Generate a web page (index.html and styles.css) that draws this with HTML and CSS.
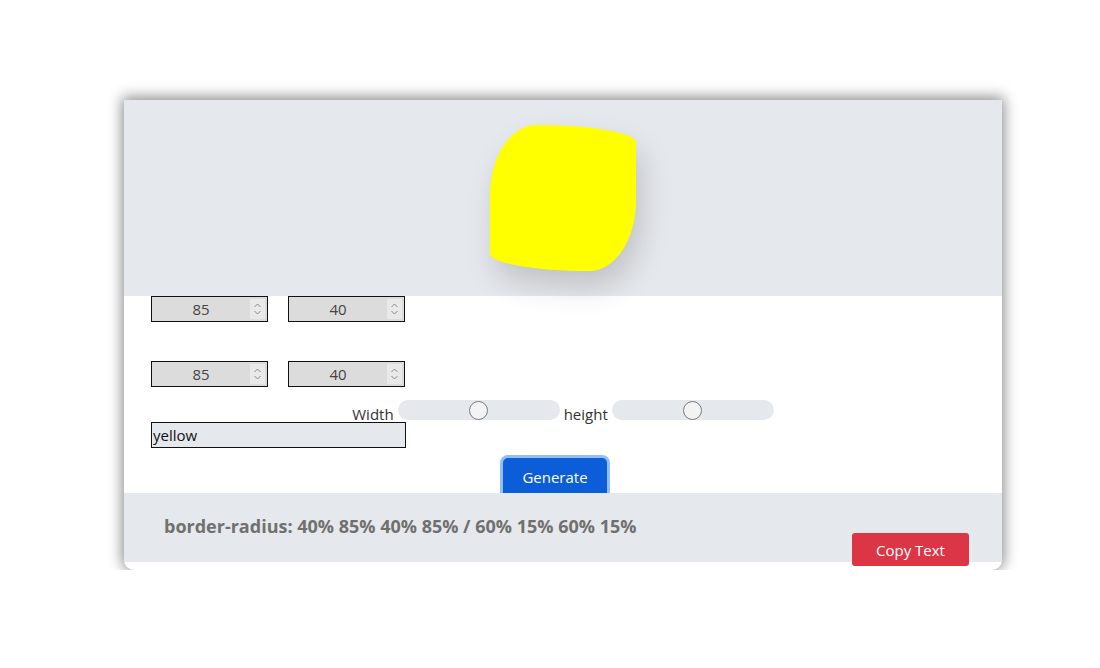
FILE: index.html
```html
<!DOCTYPE html>
<html>
<head>
<meta charset="utf-8">
<link rel="stylesheet" href="styles.css">
</head>
<body>
<div class="card">
  <div class="preview">
    <div class="blob"></div>
  </div>
  <div class="controls">
    <div class="num-row">
      <div class="numbox"><span class="val">85</span><span class="spin"><svg width="9" height="14" viewBox="0 0 9 14"><path d="M1.5 5 L4.5 2 L7.5 5 M1.5 9 L4.5 12 L7.5 9" fill="none" stroke="#8a8a8a" stroke-width="1"/></svg></span></div>
      <div class="numbox"><span class="val">40</span><span class="spin"><svg width="9" height="14" viewBox="0 0 9 14"><path d="M1.5 5 L4.5 2 L7.5 5 M1.5 9 L4.5 12 L7.5 9" fill="none" stroke="#8a8a8a" stroke-width="1"/></svg></span></div>
    </div>
    <div class="num-row second">
      <div class="numbox"><span class="val">85</span><span class="spin"><svg width="9" height="14" viewBox="0 0 9 14"><path d="M1.5 5 L4.5 2 L7.5 5 M1.5 9 L4.5 12 L7.5 9" fill="none" stroke="#8a8a8a" stroke-width="1"/></svg></span></div>
      <div class="numbox"><span class="val">40</span><span class="spin"><svg width="9" height="14" viewBox="0 0 9 14"><path d="M1.5 5 L4.5 2 L7.5 5 M1.5 9 L4.5 12 L7.5 9" fill="none" stroke="#8a8a8a" stroke-width="1"/></svg></span></div>
    </div>
    <div class="slider-row">
      <label class="lbl">Width</label>
      <input class="range" type="range" min="0" max="100" value="50">
      <label class="lbl">height</label>
      <input class="range" type="range" min="0" max="100" value="50">
    </div>
    <input class="color-input" type="text" value="yellow">
    <div class="gen-wrap">
      <button class="btn-gen">Generate</button>
    </div>
  </div>
  <div class="footer">
    <span class="code">border-radius: 40% 85% 40% 85% / 60% 15% 60% 15%</span>
    <button class="btn-copy">Copy Text</button>
  </div>
</div>
</body>
</html>
```

FILE: styles.css
```css
html, body {
  margin: 0;
  padding: 0;
  background: #ffffff;
}
body {
  padding: 100px 0 0 124px;
  font-family: "Open Sans", "Noto Sans", sans-serif;
  color: #333;
}
.card {
  width: 878px;
  background: #ffffff;
  border-radius: 0 0 10px 10px;
  box-shadow: 0 -1px 14px 2px rgba(0, 0, 0, 0.45);
  padding-bottom: 8px;
}
.preview {
  height: 196px;
  background: #e5e8ec;
  display: flex;
  align-items: center;
  justify-content: center;
}
.blob {
  width: 146px;
  height: 146px;
  background: #ffff00;
  border-radius: 40% 85% 40% 85% / 60% 15% 60% 15%;
  box-shadow: 6px 16px 30px rgba(0, 0, 0, 0.16);
}
.controls {
  padding: 0 27px;
}
.num-row {
  display: flex;
  gap: 20px;
}
.num-row.second {
  margin-top: 39px;
}
.numbox {
  box-sizing: border-box;
  width: 117px;
  height: 26px;
  border: 1px solid #111;
  background: #dcdcdc;
  display: flex;
  align-items: center;
  padding: 0 2px 0 0;
}
.val {
  flex: 1;
  text-align: center;
  font-size: 15px;
  color: #444;
}
.spin {
  width: 15px;
  height: 20px;
  background: #e9e9e9;
  display: flex;
  align-items: center;
  justify-content: center;
}
.slider-row {
  display: flex;
  justify-content: center;
  align-items: baseline;
  gap: 4px;
  margin-top: 13px;
  height: 22px;
}
.lbl {
  font-size: 15px;
  line-height: 16px;
  color: #333;
}
.range {
  -webkit-appearance: none;
  appearance: none;
  width: 162px;
  height: 20px;
  margin: 0;
  background: #e5e8ec;
  border-radius: 10px;
}
.range::-webkit-slider-thumb {
  -webkit-appearance: none;
  appearance: none;
  width: 19px;
  height: 19px;
  border-radius: 50%;
  border: 1px solid #7a7a7a;
  background: #f3f3f3;
  box-sizing: border-box;
}
.color-input {
  display: block;
  box-sizing: border-box;
  width: 255px;
  height: 26px;
  margin: 0;
  padding: 0 0 0 1px;
  border: 1px solid #111;
  background: #e5e8ec;
  font-family: "Open Sans", "Noto Sans", sans-serif;
  font-size: 15px;
  color: #111;
  outline: none;
}
.gen-wrap {
  display: flex;
  justify-content: center;
  padding: 10px 16px 0 0;
  height: 35px;
  overflow: hidden;
}
.btn-gen {
  width: 104px;
  height: 40px;
  border: none;
  border-radius: 5px;
  background: #0b5ed7;
  color: #fff;
  font-family: "Open Sans", "Noto Sans", sans-serif;
  font-size: 15px;
  box-shadow: 0 0 0 3px #93bdfb;
  padding: 0 0 2px 0;
}
.footer {
  height: 69px;
  background: #e5e8ec;
  display: flex;
  align-items: flex-start;
  justify-content: space-between;
  padding: 0 33px 0 40px;
}
.code {
  margin-top: 21px;
  font-size: 18px;
  font-weight: 700;
  color: #707070;
}
.btn-copy {
  margin-top: 40px;
  width: 117px;
  height: 33px;
  border: none;
  border-radius: 3px;
  background: #dc3545;
  color: #fff;
  font-family: "Open Sans", "Noto Sans", sans-serif;
  font-size: 15px;
}
```
